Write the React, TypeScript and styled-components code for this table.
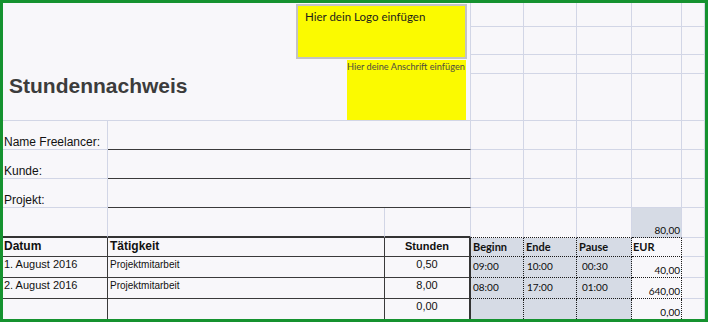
import React from 'react';
import styled, { createGlobalStyle } from 'styled-components';

const GlobalStyle = createGlobalStyle`
  html, body {
    margin: 0;
    padding: 0;
    background: #f8f7fa;
  }
  body {
    font-family: "Liberation Sans", Arial, sans-serif;
    color: #111;
  }
`;

type Edge = 'none' | 'grid' | 'ink' | 'heavy' | 'dots';

const edges: Record<Edge, string> = {
  none: 'none',
  grid: '1px solid #d2d6e6',
  ink: '1px solid #3a3a3a',
  heavy: '2px solid #333',
  dots: '1px dotted #1a1a1a',
};

const Sheet = styled.div`
  box-sizing: border-box;
  width: 708px;
  height: 322px;
  border: 3px solid #15922f;
  background: #f8f7fa;
  display: grid;
  grid-template-columns: 105px 277px 86px 53px 53px 55px 50px 23px;
  grid-template-rows: 24px 28px 19px 47px 29px 29px 29px 30px 19px 21px 21px 20px;
  overflow: hidden;
`;

interface CellProps {
  $span?: number;
  $bottom?: Edge;
  $right?: Edge;
  $fill?: boolean;
  $pad?: number;
}

const Cell = styled.div<CellProps>`
  box-sizing: border-box;
  min-width: 0;
  display: flex;
  white-space: nowrap;
  grid-column: span ${p => p.$span ?? 1};
  border-bottom: ${p => edges[p.$bottom ?? 'grid']};
  border-right: ${p => edges[p.$right ?? 'grid']};
  background: ${p => (p.$fill ? '#d6dbe5' : 'transparent')};
  padding-left: ${p => p.$pad ?? 0}px;
`;

/* Header block: title on the left, placeholder boxes on the right */
const Masthead = styled.div`
  box-sizing: border-box;
  grid-column: span 3;
  grid-row: span 4;
  display: grid;
  grid-template-columns: 1fr auto;
  border-right: ${edges.grid};
  border-bottom: ${edges.grid};
`;

const Title = styled.h1`
  align-self: end;
  margin: 0 0 24px 6px;
  font: bold 21px/21px "Liberation Sans", Arial, sans-serif;
  color: #3c3c3c;
`;

const Placeholders = styled.div`
  display: flex;
  flex-direction: column;
  align-items: flex-end;
  gap: 1px;
  padding: 1px 3px 0 0;
`;

const LogoBox = styled.div`
  box-sizing: border-box;
  width: 171px;
  height: 55px;
  background: #fbfa00;
  border: 2px solid #c3c3c6;
  padding: 4px 0 0 7px;
  font: 11.5px/14px Lato, "Open Sans", sans-serif;
  color: #1c1c1c;
`;

const AddressBox = styled.div`
  box-sizing: border-box;
  width: 119px;
  flex: 1;
  margin-right: 1px;
  background: #fbfa00;
  padding-top: 1px;
  font: 9.2px/11px Lato, "Open Sans", sans-serif;
  color: #4c4c40;
  white-space: nowrap;
`;

const FieldLabel = styled(Cell)`
  align-items: flex-end;
  font-size: 12px;
  line-height: 13px;
`;

const HeadCell = styled(Cell)<{ $center?: boolean; $size?: number }>`
  align-items: flex-start;
  justify-content: ${p => (p.$center ? 'center' : 'flex-start')};
  padding-top: 1px;
  font-weight: bold;
  font-size: ${p => p.$size ?? 12}px;
  line-height: 14px;
`;

const EntryCell = styled(Cell)<{ $center?: boolean; $size?: number }>`
  align-items: flex-start;
  justify-content: ${p => (p.$center ? 'center' : 'flex-start')};
  padding-top: 1px;
  font-size: ${p => p.$size ?? 11}px;
  line-height: 13px;
`;

const TimeHead = styled(Cell)`
  align-items: center;
  font: bold 11px/12px Lato, "Open Sans", sans-serif;
`;

const TimeCell = styled(Cell)`
  align-items: flex-start;
  padding-top: 3px;
  font: 10px/12px Lato, "Open Sans", sans-serif;
  color: #0c0c0c;
`;

const AmountCell = styled(Cell)`
  align-items: flex-end;
  justify-content: flex-end;
  padding-right: 1px;
  padding-bottom: 1px;
  font: 10px/12px Lato, "Open Sans", sans-serif;
  color: #0c0c0c;
`;

const entries = [
  { date: '1. August 2016', task: 'Projektmitarbeit', hours: '0,50', start: '09:00', end: '10:00', pause: '00:30', eur: '40,00' },
  { date: '2. August 2016', task: 'Projektmitarbeit', hours: '8,00', start: '08:00', end: '17:00', pause: '01:00', eur: '640,00' },
  { date: '', task: '', hours: '0,00', start: '', end: '', pause: '', eur: '0,00' },
];

const fields = ['Name Freelancer:', 'Kunde:', 'Projekt:'];

const SpareCells: React.FC<{ count: number }> = ({ count }) => (
  <>
    {Array.from({ length: count }, (_, i) => (
      <Cell key={i} />
    ))}
  </>
);

export default function App() {
  return (
    <>
      <GlobalStyle />
      <Sheet>
        <Masthead>
          <Title>Stundennachweis</Title>
          <Placeholders>
            <LogoBox>Hier dein Logo einfügen</LogoBox>
            <AddressBox>Hier deine Anschrift einfügen</AddressBox>
          </Placeholders>
        </Masthead>
        {/* spare columns beside the header block, rows 1-4 */}
        <SpareCells count={20} />

        {fields.map(label => (
          <React.Fragment key={label}>
            <FieldLabel $pad={1}>{label}</FieldLabel>
            <Cell $span={2} $bottom="ink" />
            <SpareCells count={5} />
          </React.Fragment>
        ))}

        {/* row above the table: totals line */}
        <Cell $bottom="heavy" />
        <Cell $bottom="heavy" />
        <Cell $bottom="heavy" />
        <Cell $bottom="dots" />
        <Cell $bottom="dots" />
        <Cell $bottom="dots" />
        <AmountCell $bottom="dots" $fill>80,00</AmountCell>
        <Cell />

        {/* table header */}
        <HeadCell $pad={1} $right="ink" $bottom="ink">Datum</HeadCell>
        <HeadCell $pad={2} $right="ink" $bottom="ink">Tätigkeit</HeadCell>
        <HeadCell $center $size={11} $right="heavy" $bottom="ink">Stunden</HeadCell>
        <TimeHead $pad={2} $fill $right="dots" $bottom="dots">Beginn</TimeHead>
        <TimeHead $pad={2} $fill $right="dots" $bottom="dots">Ende</TimeHead>
        <TimeHead $pad={2} $fill $right="dots" $bottom="dots">Pause</TimeHead>
        <TimeHead $pad={1} $right="dots" $bottom="dots">EUR</TimeHead>
        <Cell />

        {entries.map((e, i) => {
          const last = i === entries.length - 1;
          const b: Edge = last ? 'none' : 'ink';
          const d: Edge = last ? 'none' : 'dots';
          return (
            <React.Fragment key={i}>
              <EntryCell $pad={1} $right="ink" $bottom={b}>{e.date}</EntryCell>
              <EntryCell $pad={2} $size={10} $right="ink" $bottom={b}>{e.task}</EntryCell>
              <EntryCell $center $right="heavy" $bottom={b}>{e.hours}</EntryCell>
              <TimeCell $pad={2} $fill $right="dots" $bottom={d}>{e.start}</TimeCell>
              <TimeCell $pad={3} $fill $right="dots" $bottom={d}>{e.end}</TimeCell>
              <TimeCell $pad={5} $fill $right="dots" $bottom={d}>{e.pause}</TimeCell>
              <AmountCell $right="dots" $bottom={d}>{e.eur}</AmountCell>
              <Cell $bottom={last ? 'none' : 'grid'} />
            </React.Fragment>
          );
        })}
      </Sheet>
    </>
  );
}
